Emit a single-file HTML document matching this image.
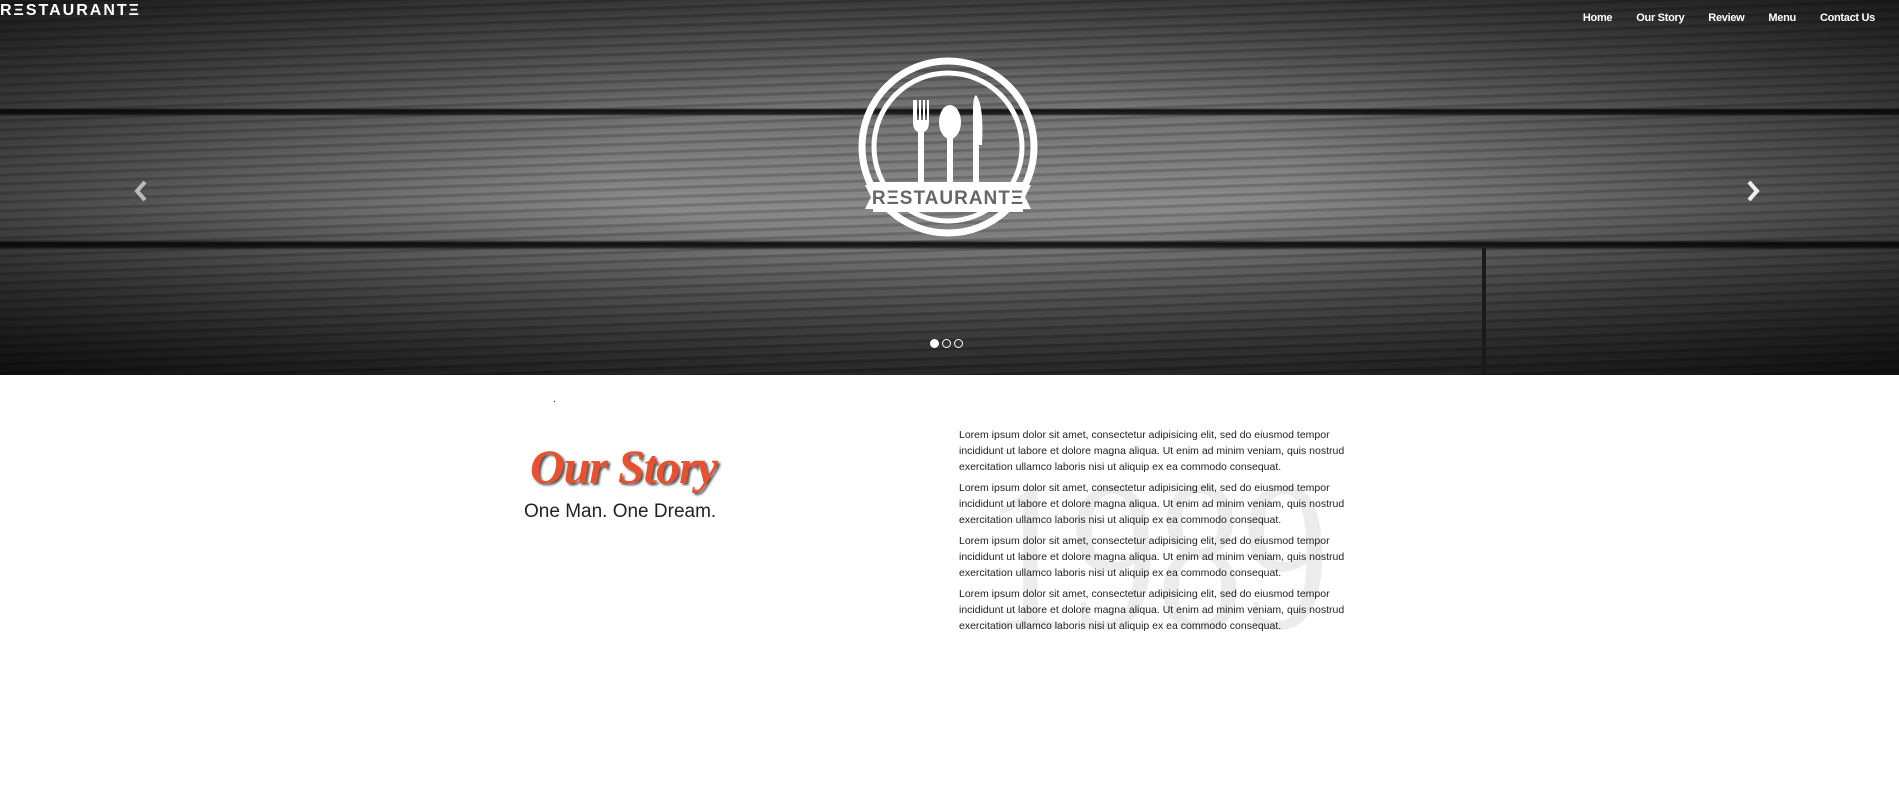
<!DOCTYPE html>
<html><head><meta charset="utf-8"><style>
*{margin:0;padding:0;box-sizing:border-box}
body{width:1899px;height:806px;background:#fff;font-family:"Liberation Sans",sans-serif;overflow:hidden;position:relative}
.hero{position:absolute;left:0;top:0;width:1899px;height:375px;overflow:hidden;
background:
radial-gradient(ellipse at 50% 45%,rgba(0,0,0,0) 25%,rgba(0,0,0,.8) 100%),
linear-gradient(180deg,transparent 0,transparent 108px,#111 110px,#222 114px,transparent 116px,transparent 240px,#111 243px,#222 247px,transparent 250px),
repeating-linear-gradient(178deg,rgba(255,255,255,.06) 0 2px,rgba(0,0,0,.14) 3px 5px,rgba(255,255,255,.03) 6px 9px),
linear-gradient(180deg,#555 0,#777 40%,#858585 55%,#666 75%,#444 100%);}
.seam{position:absolute;left:1482px;top:248px;width:4px;height:127px;background:#1a1a1a}
.brand{position:absolute;left:0;top:2px;color:#fff;font-weight:bold;font-size:16px;letter-spacing:2px}
.nav{position:absolute;top:12px;right:0;display:flex;font-size:11px;font-weight:bold;color:#fff;letter-spacing:-0.3px}
.nav span{margin-right:24px}
.dots{position:absolute;top:339px;left:930px;display:flex;gap:3px}
.dots i{width:9px;height:9px;border:1px solid #fff;border-radius:50%;display:block}
.story{position:absolute;left:530px;top:440px;color:#e9502f;font-family:"Liberation Serif",serif;font-style:italic;font-weight:bold;font-size:48px;text-shadow:2px 2px 2px #555;letter-spacing:-1px}
.sub{position:absolute;left:524px;top:501px;font-size:19px;color:#222}
.big{position:absolute;left:985px;top:448px;font-family:"Liberation Serif",serif;font-size:215px;color:#ececec;line-height:1;transform:scaleX(.8);transform-origin:left top;font-style:normal}
.txt{position:absolute;left:959px;top:427px;width:400px;font-size:10.5px;line-height:16px;color:#222}
.txt p{margin-bottom:5px}
</style></head><body>
<div class="hero">
<div class="seam"></div>
<div class="brand">RΞSTAURANTΞ</div>
<div class="nav"><span>Home</span><span>Our Story</span><span>Review</span><span>Menu</span><span>Contact Us</span></div>
<svg style="position:absolute;left:133px;top:180px" width="16" height="22" viewBox="0 0 16 22"><path d="M12 2L4 11l8 9" fill="none" stroke="#bbb" stroke-width="4"/></svg>
<svg style="position:absolute;left:1745px;top:180px" width="16" height="22" viewBox="0 0 16 22"><path d="M4 2l8 9-8 9" fill="none" stroke="#eee" stroke-width="4"/></svg>
<svg style="position:absolute;left:843px;top:55px" width="210" height="185" viewBox="0 0 210 185">
<circle cx="105" cy="92" r="86" fill="none" stroke="#fff" stroke-width="7"/>
<circle cx="105" cy="92" r="74" fill="none" stroke="#fff" stroke-width="5"/>
<path d="M70 45v22q0 8 5 10v55h6v-55q5-2 5-10v-22h-2v20h-2v-20h-2v20h-2v-20h-2v20h-2v-20z" fill="#fff"/>
<ellipse cx="107" cy="67" rx="11" ry="17" fill="#fff"/><rect x="104" y="78" width="6" height="55" fill="#fff"/>
<path d="M133 40q8 10 6 50h-3v42h-6v-77q0-13 3-15z" fill="#fff"/>
<path d="M22 130h34v24h-34l6-12z M188 130h-34v24h34l-6-12z" fill="#fff"/>
<rect x="30" y="127" width="150" height="30" fill="#fff"/>
<text x="105" y="149" text-anchor="middle" font-family="Liberation Sans" font-weight="bold" font-size="19" fill="#666" letter-spacing="1">RΞSTAURANTΞ</text>
</svg>
<div class="dots"><i style="background:#fff"></i><i></i><i></i></div>
</div>
<div style="position:absolute;left:553px;top:394px;font-size:10px">.</div>
<div class="big">1989</div>
<div class="story">Our Story</div>
<div class="sub">One Man. One Dream.</div>
<div class="txt">
<p>Lorem ipsum dolor sit amet, consectetur adipisicing elit, sed do eiusmod tempor incididunt ut labore et dolore magna aliqua. Ut enim ad minim veniam, quis nostrud exercitation ullamco laboris nisi ut aliquip ex ea commodo consequat.</p>
<p>Lorem ipsum dolor sit amet, consectetur adipisicing elit, sed do eiusmod tempor incididunt ut labore et dolore magna aliqua. Ut enim ad minim veniam, quis nostrud exercitation ullamco laboris nisi ut aliquip ex ea commodo consequat.</p>
<p>Lorem ipsum dolor sit amet, consectetur adipisicing elit, sed do eiusmod tempor incididunt ut labore et dolore magna aliqua. Ut enim ad minim veniam, quis nostrud exercitation ullamco laboris nisi ut aliquip ex ea commodo consequat.</p>
<p>Lorem ipsum dolor sit amet, consectetur adipisicing elit, sed do eiusmod tempor incididunt ut labore et dolore magna aliqua. Ut enim ad minim veniam, quis nostrud exercitation ullamco laboris nisi ut aliquip ex ea commodo consequat.</p>
</div>
</body></html>
